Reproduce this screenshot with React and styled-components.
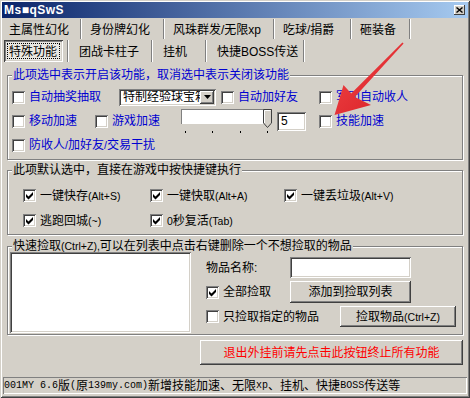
import React from 'react'
import styled, { createGlobalStyle, css } from 'styled-components'

const GlobalStyle = createGlobalStyle`
  html, body {
    margin: 0;
    padding: 0;
    background: #d4d0c8;
  }
  body {
    font-family: "Liberation Sans", "Noto Sans CJK SC", sans-serif;
    font-size: 12px;
    color: #000;
  }
`

const sunken = css`
  box-shadow: inset 1px 1px 0 #808080, inset -1px -1px 0 #fff,
    inset 2px 2px 0 #404040, inset -2px -2px 0 #d4d0c8;
`
const raised = css`
  box-shadow: inset -1px -1px 0 #404040, inset 1px 1px 0 #fff,
    inset -2px -2px 0 #808080, inset 2px 2px 0 #d4d0c8;
`

const BLUE = '#0000d0'

// ascii runs get their own (smaller) font, like the old bitmap fonts did
const ascii = /([\x20-\x7e]+)/
const mix = (text, Latin) =>
  text.split(ascii).map((part, i) => (i % 2 ? <Latin key={i}>{part}</Latin> : part))

function Check({ label, checked, blue }) {
  return (
    <CheckWrap $color={blue ? BLUE : '#000'}>
      <Box>
        {checked && (
          <svg width="13" height="13" viewBox="0 0 13 13">
            <polygon points="3,5 5.5,7.5 10,3 10,6 5.5,10.5 3,8" fill="#000" />
          </svg>
        )}
      </Box>
      <span>{mix(label, Small)}</span>
    </CheckWrap>
  )
}

function Slider() {
  return (
    <SliderBox>
      <Track>
        <svg width="9" height="19" viewBox="0 0 9 19">
          <path d="M0.5 0.5 H8.5 V14 L4.5 18.5 L0.5 14 Z" fill="#d4d0c8" stroke="#404040" />
          <path d="M1.5 14 V1.5 H7.5" fill="none" stroke="#fff" />
        </svg>
      </Track>
      <Ticks>
        <Tick />
        <Tick />
        <Tick />
        <Tick />
      </Ticks>
    </SliderBox>
  )
}

const row1 = [
  { label: '主属性幻化', w: 79 },
  { label: '身份牌幻化', w: 81 },
  { label: '风珠群发/无限xp', w: 108 },
  { label: '吃球/捐爵', w: 75 },
  { label: '砸装备', w: 57 },
]

const row2 = [
  { label: '团战卡柱子', w: 82 },
  { label: '挂机', w: 52 },
  { label: '快捷BOSS传送', w: 96 },
]

export default function App() {
  return (
    <>
      <GlobalStyle />
      <Window>
        <TitleBar>
          <Title>Ms■qSwS</Title>
          <CloseBtn>
            <svg width="7" height="6" viewBox="0 0 7 6">
              <path d="M0.5 0.5 L6.5 5.5 M6.5 0.5 L0.5 5.5" stroke="#000" strokeWidth="1.4" />
            </svg>
          </CloseBtn>
        </TitleBar>

        <TabRow $h={20}>
          {row1.map((t) => (
            <Tab key={t.label} $w={t.w}>
              {t.label}
            </Tab>
          ))}
        </TabRow>
        <TabRow $h={22}>
          <Tab $w={66} $pl={2}>
            <Pressed>
              <Focus>特殊功能</Focus>
            </Pressed>
          </Tab>
          {row2.map((t) => (
            <Tab key={t.label} $w={t.w} $pl={9}>
              {t.label}
            </Tab>
          ))}
        </TabRow>

        <Group $mt={7}>
          <Legend $color={BLUE}>此项选中表示开启该功能，取消选中表示关闭该功能</Legend>
          <Rows $pad="4px 0 2px 4px">
            <Row $h={24}>
              <Cell $w={107}>
                <Check blue label="自动抽奖抽取" />
              </Cell>
              <Cell $w={102}>
                <Combo>
                  <ComboText>特制经验球宝箱</ComboText>
                  <ComboBtn>
                    <svg width="7" height="4" viewBox="0 0 7 4">
                      <polygon points="0,0 7,0 3.5,4" fill="#000" />
                    </svg>
                  </ComboBtn>
                </Combo>
              </Cell>
              <Cell $w={98}>
                <Check blue label="自动加好友" />
              </Cell>
              <Check blue label="军团自动收人" />
            </Row>
            <Row $h={24}>
              <Cell $w={83}>
                <Check blue label="移动加速" />
              </Cell>
              <Cell $w={85}>
                <Check blue label="游戏加速" />
              </Cell>
              <Cell $w={97}>
                <Slider />
              </Cell>
              <Cell $w={42}>
                <TextBox $w={29} $h={19}>5</TextBox>
              </Cell>
              <Check blue label="技能加速" />
            </Row>
            <Row $h={24}>
              <Check blue label="防收人/加好友/交易干扰" />
            </Row>
          </Rows>
        </Group>

        <Group $mt={4}>
          <Legend $color="#000">此项默认选中，直接在游戏中按快捷键执行</Legend>
          <HotkeyGrid>
            <Check checked label="一键快存(Alt+S)" />
            <Check checked label="一键快取(Alt+A)" />
            <Check checked label="一键丢垃圾(Alt+V)" />
            <Check checked label="逃跑回城(~)" />
            <Check checked label="0秒复活(Tab)" />
          </HotkeyGrid>
        </Group>

        <Group $mt={5}>
          <Legend $color="#000">{mix('快速捡取(Ctrl+Z),可以在列表中点击右键删除一个不想捡取的物品', Small)}</Legend>
          <PickArea>
            <ListBox />
            <PickPanel>
              <Row $h={21} $mt={5}>
                <FieldLabel $w={84}>物品名称:</FieldLabel>
                <TextBox $w={121} $h={21} />
              </Row>
              <Row $h={22} $mt={3}>
                <Cell $w={84}>
                  <Check checked label="全部捡取" />
                </Cell>
                <Button $w={121} $h={22}>添加到捡取列表</Button>
              </Row>
              <Row $h={21} $mt={3}>
                <Cell $w={134}>
                  <Check label="只捡取指定的物品" />
                </Cell>
                <Button $w={116} $h={21}>{mix('捡取物品(Ctrl+Z)', Small)}</Button>
              </Row>
            </PickPanel>
          </PickArea>
        </Group>

        <ButtonRow>
          <Button $w={263} $h={25} $color="#f00">退出外挂前请先点击此按钮终止所有功能</Button>
        </ButtonRow>

        <StatusBar>{mix('001MY 6.6版(原139my.com)新增技能加速、无限xp、挂机、快捷BOSS传送等', Mono)}</StatusBar>

        <Arrow width="470" height="398" viewBox="0 0 470 398">
          <defs>
            <linearGradient id="arrowRed" x1="0" y1="0" x2="1" y2="1">
              <stop offset="0" stopColor="#f04848" />
              <stop offset="1" stopColor="#d81c24" />
            </linearGradient>
          </defs>
          <polygon
            points="403.6,43.4 354.8,96.9 371,105 334.5,115 343.5,85 351.2,93.5 402.4,42.6"
            fill="url(#arrowRed)"
          />
        </Arrow>
      </Window>
    </>
  )
}

const Window = styled.div`
  position: relative;
  width: 470px;
  height: 398px;
  box-sizing: border-box;
  padding: 2px;
  background: #d4d0c8;
  box-shadow: inset 1px 1px 0 #d4d0c8, inset -1px -1px 0 #404040,
    inset 2px 2px 0 #fff, inset -2px -2px 0 #808080;
  display: flex;
  flex-direction: column;
  overflow: hidden;
`

const TitleBar = styled.div`
  height: 16px;
  flex: none;
  display: flex;
  align-items: center;
  justify-content: space-between;
  padding: 0 3px 0 2px;
  background: linear-gradient(to right, #0a246a, #a6caf0);
`

const Title = styled.div`
  color: #fff;
  font-weight: bold;
  font-size: 12px;
  line-height: 14px;
  letter-spacing: 0.5px;
`

const CloseBtn = styled.div`
  width: 11px;
  height: 10px;
  box-sizing: border-box;
  background: #d4d0c8;
  box-shadow: inset -1px -1px 0 #404040, inset 1px 1px 0 #fff;
  display: flex;
  align-items: center;
  justify-content: center;
`

const TabRow = styled.div`
  height: ${(p) => p.$h}px;
  margin-top: 1px;
  flex: none;
  display: flex;
`

const Tab = styled.div`
  width: ${(p) => p.$w}px;
  box-sizing: border-box;
  padding-left: ${(p) => p.$pl ?? 7}px;
  padding-top: 2px;
  margin-right: 2px;
  display: flex;
  align-items: center;
  border-right: 1px solid #808080;
  box-shadow: 1px 0 0 #fff;
  white-space: nowrap;
  line-height: 14px;
`

const Pressed = styled.div`
  width: 59px;
  height: 22px;
  margin-top: -2px;
  box-sizing: border-box;
  padding: 3px;
  display: flex;
  background: #e9e7e2;
  box-shadow: inset 1px 1px 0 #404040, inset -1px -1px 0 #fff,
    inset 2px 2px 0 #808080, inset -2px -2px 0 #d4d0c8;
`

const Focus = styled.div`
  flex: 1;
  display: flex;
  align-items: center;
  padding: 2px 0 0 1px;
  border: 1px dotted #000;
`

const Group = styled.fieldset`
  margin: ${(p) => p.$mt}px 0 0 5px;
  width: 456px;
  min-inline-size: 0;
  box-sizing: border-box;
  padding: 0;
  border: 1px solid #808080;
  box-shadow: inset 1px 1px 0 #fff, 1px 1px 0 #fff;
  flex: none;
`

const Legend = styled.legend`
  margin-left: 4px;
  padding: 0 1px;
  line-height: 12px;
  font-size: 12px;
  color: ${(p) => p.$color};
  background: #d4d0c8;
  white-space: nowrap;
`

const Rows = styled.div`
  padding: ${(p) => p.$pad};
  display: flex;
  flex-direction: column;
`

const Row = styled.div`
  height: ${(p) => p.$h}px;
  margin-top: ${(p) => p.$mt ?? 0}px;
  display: flex;
  align-items: center;
`

const Cell = styled.div`
  width: ${(p) => p.$w}px;
  flex: none;
  display: flex;
  align-items: center;
`

const CheckWrap = styled.label`
  display: inline-flex;
  align-items: center;
  gap: 4px;
  color: ${(p) => p.$color};
  white-space: nowrap;
  line-height: 14px;
`

const Box = styled.span`
  width: 13px;
  height: 13px;
  flex: none;
  box-sizing: border-box;
  background: #fff;
  ${sunken};
  display: flex;
`

const Small = styled.span`
  font-size: 10.5px;
`

const Mono = styled.span`
  font-family: "Liberation Mono", monospace;
  font-size: 10px;
`

const Combo = styled.div`
  width: 97px;
  height: 17px;
  box-sizing: border-box;
  padding: 2px;
  background: #fff;
  ${sunken};
  display: flex;
  align-items: center;
`

const ComboText = styled.span`
  flex: 1;
  overflow: hidden;
  white-space: nowrap;
  padding-left: 2px;
  line-height: 13px;
`

const ComboBtn = styled.div`
  width: 14px;
  height: 13px;
  flex: none;
  background: #d4d0c8;
  ${raised};
  display: flex;
  align-items: center;
  justify-content: center;
`

const SliderBox = styled.div`
  width: 92px;
  height: 24px;
  display: flex;
  flex-direction: column;
`

const Track = styled.div`
  height: 15px;
  margin-left: 1px;
  background: #fff;
  box-shadow: inset 1px 1px 0 #808080, inset -1px -1px 0 #fff;
  display: flex;
  justify-content: flex-end;
  align-items: flex-start;
`

const Ticks = styled.div`
  margin-top: 7px;
  padding: 0 4px 0 5px;
  display: flex;
  justify-content: space-between;
`

const Tick = styled.span`
  width: 1px;
  height: 2px;
  background: #000;
`

const TextBox = styled.div`
  width: ${(p) => p.$w}px;
  height: ${(p) => p.$h}px;
  box-sizing: border-box;
  padding: 2px 4px;
  background: #fff;
  ${sunken};
  display: flex;
  align-items: center;
  line-height: 14px;
`

const HotkeyGrid = styled.div`
  padding: 7px 0 1px 15px;
  display: grid;
  grid-template-columns: 127px 134px auto;
  grid-auto-rows: 25px;
  align-items: center;
`

const PickArea = styled.div`
  padding: 0 0 1px 2px;
  display: flex;
`

const ListBox = styled.div`
  width: 181px;
  height: 81px;
  box-sizing: border-box;
  background: #fff;
  ${sunken};
`

const PickPanel = styled.div`
  margin-left: 15px;
  display: flex;
  flex-direction: column;
`

const FieldLabel = styled.div`
  width: ${(p) => p.$w}px;
  line-height: 14px;
`

const Button = styled.div`
  width: ${(p) => p.$w}px;
  height: ${(p) => p.$h}px;
  box-sizing: border-box;
  background: #d4d0c8;
  ${raised};
  color: ${(p) => p.$color ?? '#000'};
  display: flex;
  align-items: center;
  justify-content: center;
  white-space: nowrap;
  line-height: 14px;
`

const ButtonRow = styled.div`
  margin: 5px 5px 0 0;
  display: flex;
  justify-content: flex-end;
`

const StatusBar = styled.div`
  margin: 12px 1px 0 1px;
  height: 17px;
  box-sizing: border-box;
  padding-left: 1px;
  box-shadow: inset 1px 1px 0 #808080, inset -1px -1px 0 #fff;
  display: flex;
  align-items: center;
  white-space: nowrap;
  line-height: 14px;
`

const Arrow = styled.svg`
  position: absolute;
  left: 0;
  top: 0;
  pointer-events: none;
`
